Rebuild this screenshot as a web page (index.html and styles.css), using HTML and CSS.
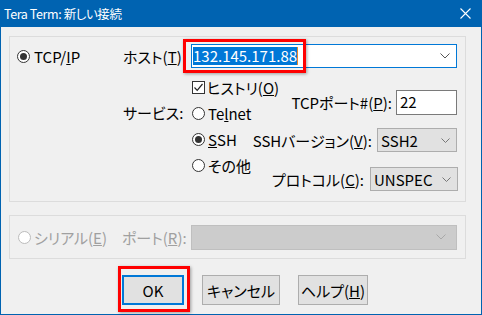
FILE: index.html
```html
<!doctype html>
<html lang="ja">
<head>
    <meta charset="UTF-8">
    <title>Tera Term: 新しい接続</title>
    <link rel="stylesheet" href="styles.css">
</head>
<body>
<div class="window">
    <div class="titlebar">
        <span class="title">Tera Term: 新しい接続</span>
        <svg class="close" width="11" height="11" viewBox="0 0 11 11">
            <path d="M0.5 0.5 L10.5 10.5 M10.5 0.5 L0.5 10.5" stroke="#fff" stroke-width="1.1" fill="none"/>
        </svg>
    </div>

    <div class="content">
        <div class="group tcp-group">
            <div class="opt tcp-opt"><span class="radio on"></span>TCP/<u>I</u>P</div>
            <div class="tcp-main">
                <div class="host-row">
                    <span class="field-label">ホスト(<u>T</u>)</span>
                    <div class="combo focused">
                        <span class="sel">132.145.171.88</span>
                        <svg class="chev" width="10" height="6" viewBox="0 0 10 6"><path d="M0.5 0.5 L5 5 L9.5 0.5" stroke="#555" fill="none"/></svg>
                        <span class="mark host-mark"></span>
                    </div>
                </div>
                <div class="svc">
                    <span class="field-label svc-label">サービス:</span>
                    <div class="svc-opts">
                        <div class="opt">
                            <span class="check"><svg width="11" height="11" viewBox="0 0 11 11"><path d="M1.5 5.5 L4.2 8.3 L9.5 2" stroke="#222" stroke-width="1.2" fill="none"/></svg></span>ヒストリ(<u>O</u>)
                        </div>
                        <div class="opt"><span class="radio"></span>Te<u>l</u>net</div>
                        <div class="opt"><span class="radio on"></span><u>S</u>SH</div>
                        <div class="opt"><span class="radio"></span>その他</div>
                    </div>
                    <div class="svc-right">
                        <div class="pair port-row">
                            <span>TCPポート#(<u>P</u>):</span>
                            <span class="textbox">22</span>
                        </div>
                        <div class="pair ver-row">
                            <span>SSHバージョン(<u>V</u>):</span>
                            <span class="select ver-select">SSH2<svg class="chev" width="9" height="5" viewBox="0 0 9 5"><path d="M0.5 0.5 L4.5 4.5 L8.5 0.5" stroke="#777" fill="none"/></svg></span>
                        </div>
                        <div class="pair proto-row">
                            <span>プロトコル(<u>C</u>):</span>
                            <span class="select proto-select">UNSPEC<svg class="chev" width="9" height="5" viewBox="0 0 9 5"><path d="M0.5 0.5 L4.5 4.5 L8.5 0.5" stroke="#777" fill="none"/></svg></span>
                        </div>
                    </div>
                </div>
            </div>
        </div>

        <div class="group serial-group">
            <div class="opt serial-opt disabled"><span class="radio"></span>シリアル(<u>E</u>)</div>
            <span class="field-label disabled">ポート(<u>R</u>):</span>
            <span class="select port-select"><svg class="chev" width="10" height="6" viewBox="0 0 10 6"><path d="M0.5 0.5 L5 5 L9.5 0.5" stroke="#a8a8a8" fill="none"/></svg></span>
        </div>

        <div class="buttons">
            <div class="btn ok">OK<span class="mark ok-mark"></span></div>
            <div class="btn cancel">キャンセル</div>
            <div class="btn help">ヘルプ(<u>H</u>)</div>
        </div>
    </div>
</div>
</body>
</html>
```

FILE: styles.css
```css
body {
    margin: 0;
    padding: 0;
    font-family: "Noto Sans CJK JP", "Liberation Sans", sans-serif;
    font-size: 15px;
    font-feature-settings: "palt";
    color: #000;
}
.window {
    width: 482px;
    height: 315px;
    box-sizing: border-box;
    border: 1px solid #0063b1;
    border-top: none;
    background: #f0f0f0;
}
.titlebar {
    height: 26px;
    margin: 0 -1px;
    background: #0063b1;
    color: #fff;
    display: flex;
    align-items: center;
    padding: 0 11px 1px 4px;
}
.title {
    font-size: 12.5px;
    letter-spacing: -0.4px;
    flex: 1;
}
.content {
    padding: 9px 0 0 8px;
}
.group {
    box-sizing: border-box;
    width: 457px;
    border: 1px solid #dcdcdc;
    display: flex;
}
.tcp-group {
    height: 166px;
    padding: 7px 7px 0 7px;
}
.opt {
    display: flex;
    align-items: center;
    height: 26px;
    white-space: nowrap;
}
.tcp-opt {
    width: 106px;
    height: 24px;
}
.radio {
    width: 11px;
    height: 11px;
    border: 1px solid #333;
    border-radius: 50%;
    background: #fff;
    margin-right: 3px;
    display: flex;
    align-items: center;
    justify-content: center;
    flex-shrink: 0;
}
.tcp-opt .radio {
    margin-right: 4px;
}
.radio.on::after {
    content: "";
    width: 7px;
    height: 7px;
    border-radius: 50%;
    background: #333;
}
.check {
    width: 11px;
    height: 11px;
    border: 1px solid #333;
    background: #fff;
    margin-right: 2px;
    display: flex;
}
.tcp-main {
    display: flex;
    flex-direction: column;
}
.host-row {
    display: flex;
    align-items: center;
    height: 24px;
}
.field-label {
    width: 68px;
    white-space: nowrap;
}
.combo {
    position: relative;
    box-sizing: border-box;
    width: 266px;
    height: 24px;
    background: #fff;
    border: 1px solid #0078d7;
    display: flex;
    align-items: center;
    padding: 0 6px 0 1px;
}
.sel {
    background: #0078d7;
    color: #fff;
    line-height: 18px;
    border-right: 1px solid #e8882a;
    flex: none;
}
.combo .chev {
    margin-left: auto;
}
.mark {
    position: absolute;
    box-sizing: border-box;
    border: 3px solid #ff0000;
    box-shadow: 1px 1px 3px rgba(0, 0, 0, 0.35);
}
.host-mark {
    left: -9px;
    top: -6px;
    width: 123px;
    height: 34px;
}
.svc {
    display: flex;
    margin-top: 6px;
}
.svc-label {
    padding-top: 26px;
    line-height: 26px;
}
.svc-opts {
    display: flex;
    flex-direction: column;
    padding-left: 1px;
    width: 55px;
}
.svc-right {
    margin-left: auto;
    margin-top: 16px;
    display: flex;
    flex-direction: column;
    align-items: flex-end;
}
.pair {
    display: flex;
    align-items: center;
    white-space: nowrap;
}
.textbox {
    box-sizing: border-box;
    width: 61px;
    height: 25px;
    margin-left: 4px;
    background: #fff;
    border: 1px solid #7a7a7a;
    padding-left: 3px;
    line-height: 22px;
}
.select {
    box-sizing: border-box;
    display: flex;
    align-items: center;
    background: #e1e1e1;
    border: 1px solid #adadad;
    padding: 0 6px 0 3px;
}
.select .chev {
    margin-left: auto;
}
.ver-row {
    margin-top: 13px;
}
.ver-select {
    width: 80px;
    height: 24px;
    margin-left: 5px;
}
.proto-row {
    margin-top: 15px;
    margin-right: -1px;
}
.proto-select {
    width: 88px;
    height: 24px;
    margin-left: 6px;
}
.serial-group {
    margin-top: 13px;
    height: 44px;
    align-items: center;
    padding-left: 8px;
}
.serial-opt {
    width: 104px;
}
.disabled {
    color: #a0a0a0;
}
.disabled .radio {
    border-color: #bcbcbc;
}
.serial-group .field-label {
    width: 69px;
}
.port-select {
    width: 266px;
    height: 25px;
    background: #cccccc;
    border-color: #bfbfbf;
    padding-right: 10px;
}
.buttons {
    display: flex;
    gap: 18px;
    margin-top: 16px;
    padding-left: 113px;
}
.btn {
    position: relative;
    box-sizing: border-box;
    height: 30px;
    background: #e1e1e1;
    border: 1px solid #adadad;
    display: flex;
    align-items: center;
    justify-content: center;
}
.ok {
    width: 62px;
    border: 2px solid #0078d7;
}
.cancel {
    width: 78px;
}
.help {
    width: 70px;
}
.ok-mark {
    left: -6px;
    top: -11px;
    width: 72px;
    height: 46px;
}
```
